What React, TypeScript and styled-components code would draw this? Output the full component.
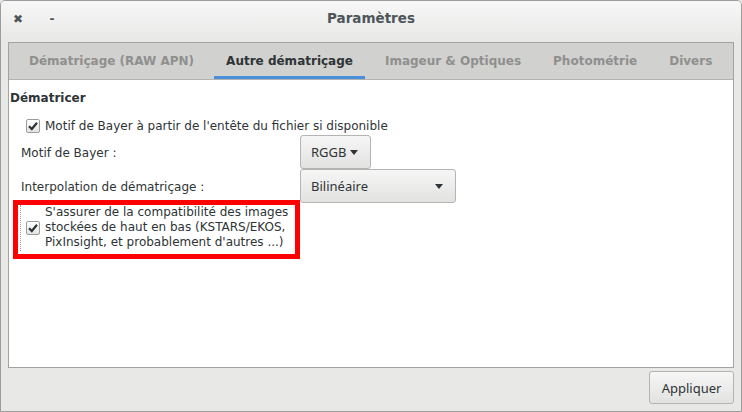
import React from "react";
import styled, { createGlobalStyle } from "styled-components";

const Global = createGlobalStyle`
  html, body { margin: 0; padding: 0; background: #e8e8e7; }
  body { font-family: "DejaVu Sans", sans-serif; font-size: 12px; color: #2e3436; }
  * { box-sizing: border-box; }
`;

const Window = styled.div`
  width: 742px;
  height: 412px;
  display: flex;
  flex-direction: column;
  background: #e8e8e7;
  border: 1px solid #9d9d9b;
  border-radius: 5px 5px 0 0;
  overflow: hidden;
`;

const TitleBar = styled.div`
  height: 41px;
  flex: none;
  display: grid;
  grid-template-columns: 80px 1fr 80px;
  align-items: center;
  background: linear-gradient(#f7f7f7, #e8e8e7);
`;

const WinButtons = styled.div`
  display: flex;
  align-items: center;
  gap: 22px;
  padding-left: 11px;
  padding-bottom: 5px;
`;

const WinButton = styled.span`
  width: 12px;
  display: flex;
  justify-content: center;
  font-weight: bold;
  font-size: 12px;
  color: #4d5559;
`;

const Title = styled.div`
  text-align: center;
  font-weight: bold;
  font-size: 13.5px;
  color: #4d5559;
  padding-bottom: 8px;
`;

const Body = styled.div`
  flex: 1;
  display: flex;
  flex-direction: column;
  padding: 0 7px 0 7px;
`;

const Notebook = styled.div`
  height: 326px;
  display: flex;
  flex-direction: column;
  border: 1px solid #a3a3a1;
  background: #ffffff;
`;

const TabBar = styled.div`
  height: 37px;
  display: flex;
  align-items: stretch;
  gap: 8px;
  padding-left: 8px;
  background: #d1d1cf;
  border-bottom: 1px solid #b3b3b0;
`;

const Tab = styled.div<{ $active?: boolean }>`
  display: flex;
  align-items: center;
  white-space: nowrap;
  padding: 0 12px 1px;
  font-weight: bold;
  font-size: 12px;
  color: ${(p) => (p.$active ? "#2e3436" : "#8f8f8e")};
  box-shadow: ${(p) => (p.$active ? "inset 0 -3px 0 #4a90d9" : "none")};
`;

const Content = styled.div`
  flex: 1;
  padding: 10px 0 0 1px;
  display: flex;
  flex-direction: column;
`;

const Heading = styled.div`
  font-weight: bold;
  font-size: 12px;
  line-height: 16px;
  color: #2e3436;
`;

const CheckRow = styled.label`
  display: flex;
  align-items: center;
  gap: 5px;
  margin: 12px 0 0 16px;
  line-height: 16px;
`;

const Box = styled.span`
  width: 14px;
  height: 14px;
  flex: none;
  border: 1px solid #9c9c9a;
  border-radius: 2px;
  background: linear-gradient(#ffffff, #e4e4e3);
  display: flex;
  align-items: center;
  justify-content: center;
`;

const FormGrid = styled.div`
  display: grid;
  grid-template-columns: 279px auto;
  grid-auto-rows: 34px;
  margin: 1px 0 0 11px;
  align-items: center;
`;

const Label = styled.div`
  line-height: 16px;
  padding-top: 1px;
`;

const Combo = styled.div<{ $w: number }>`
  width: ${(p) => p.$w}px;
  height: 34px;
  display: flex;
  align-items: center;
  justify-content: space-between;
  padding: 0 12px 0 10px;
  font-family: "Noto Sans", "Open Sans", sans-serif;
  font-size: 13px;
  color: #2e3436;
  border: 1px solid #b4b4b1;
  border-radius: 3px;
  background: linear-gradient(#f6f6f6, #e2e2e1);
`;

const Arrow = styled.span`
  width: 0;
  height: 0;
  border-left: 4px solid transparent;
  border-right: 4px solid transparent;
  border-top: 5px solid #2e3436;
`;

const Highlight = styled.div`
  position: relative;
  align-self: flex-start;
  margin: 2px 0 0 10px;
  padding: 0 0 1px 5px;
  width: 273px;
  border-left: 1px dotted #9a9a9a;
  display: flex;
  align-items: center;
  gap: 5px;
  line-height: 15px;
  &::after {
    content: "";
    position: absolute;
    left: -8px;
    top: -5px;
    right: -7px;
    bottom: -8px;
    border: 5px solid #ff0000;
    pointer-events: none;
  }
`;

const Footer = styled.div`
  flex: 1;
  display: flex;
  justify-content: flex-end;
  align-items: flex-start;
  padding-top: 3px;
`;

const Button = styled.div`
  width: 85px;
  height: 33px;
  display: flex;
  align-items: center;
  justify-content: center;
  font-family: "Noto Sans", "Open Sans", sans-serif;
  font-size: 13px;
  color: #2e3436;
  border: 1px solid #b4b4b1;
  border-radius: 3px;
  background: linear-gradient(#f6f6f6, #e2e2e1);
`;

const Check = () => (
  <Box>
    <svg width="12" height="12" viewBox="0 0 12 12">
      <path d="M2 6.2 L4.8 9 L10 2.8" fill="none" stroke="#2e3436" strokeWidth="2.2" />
    </svg>
  </Box>
);

export default function App() {
  const tabs = ["Dématriçage (RAW APN)", "Autre dématriçage", "Imageur & Optiques", "Photométrie", "Divers"];
  return (
    <>
      <Global />
      <Window>
        <TitleBar>
          <WinButtons>
            <WinButton>✖</WinButton>
            <WinButton>-</WinButton>
          </WinButtons>
          <Title>Paramètres</Title>
          <div />
        </TitleBar>
        <Body>
          <Notebook>
            <TabBar>
              {tabs.map((t, i) => (
                <Tab key={t} $active={i === 1}>{t}</Tab>
              ))}
            </TabBar>
            <Content>
              <Heading>Dématricer</Heading>
              <CheckRow>
                <Check />
                Motif de Bayer à partir de l'entête du fichier si disponible
              </CheckRow>
              <FormGrid>
                <Label>Motif de Bayer :</Label>
                <Combo $w={71}>RGGB<Arrow /></Combo>
                <Label>Interpolation de dématriçage :</Label>
                <Combo $w={156}>Bilinéaire<Arrow /></Combo>
              </FormGrid>
              <Highlight>
                <Check />
                <span>
                  S'assurer de la compatibilité des images stockées de haut en bas (KSTARS/EKOS, PixInsight, et probablement d'autres ...)
                </span>
              </Highlight>
            </Content>
          </Notebook>
          <Footer>
            <Button>Appliquer</Button>
          </Footer>
        </Body>
      </Window>
    </>
  );
}
